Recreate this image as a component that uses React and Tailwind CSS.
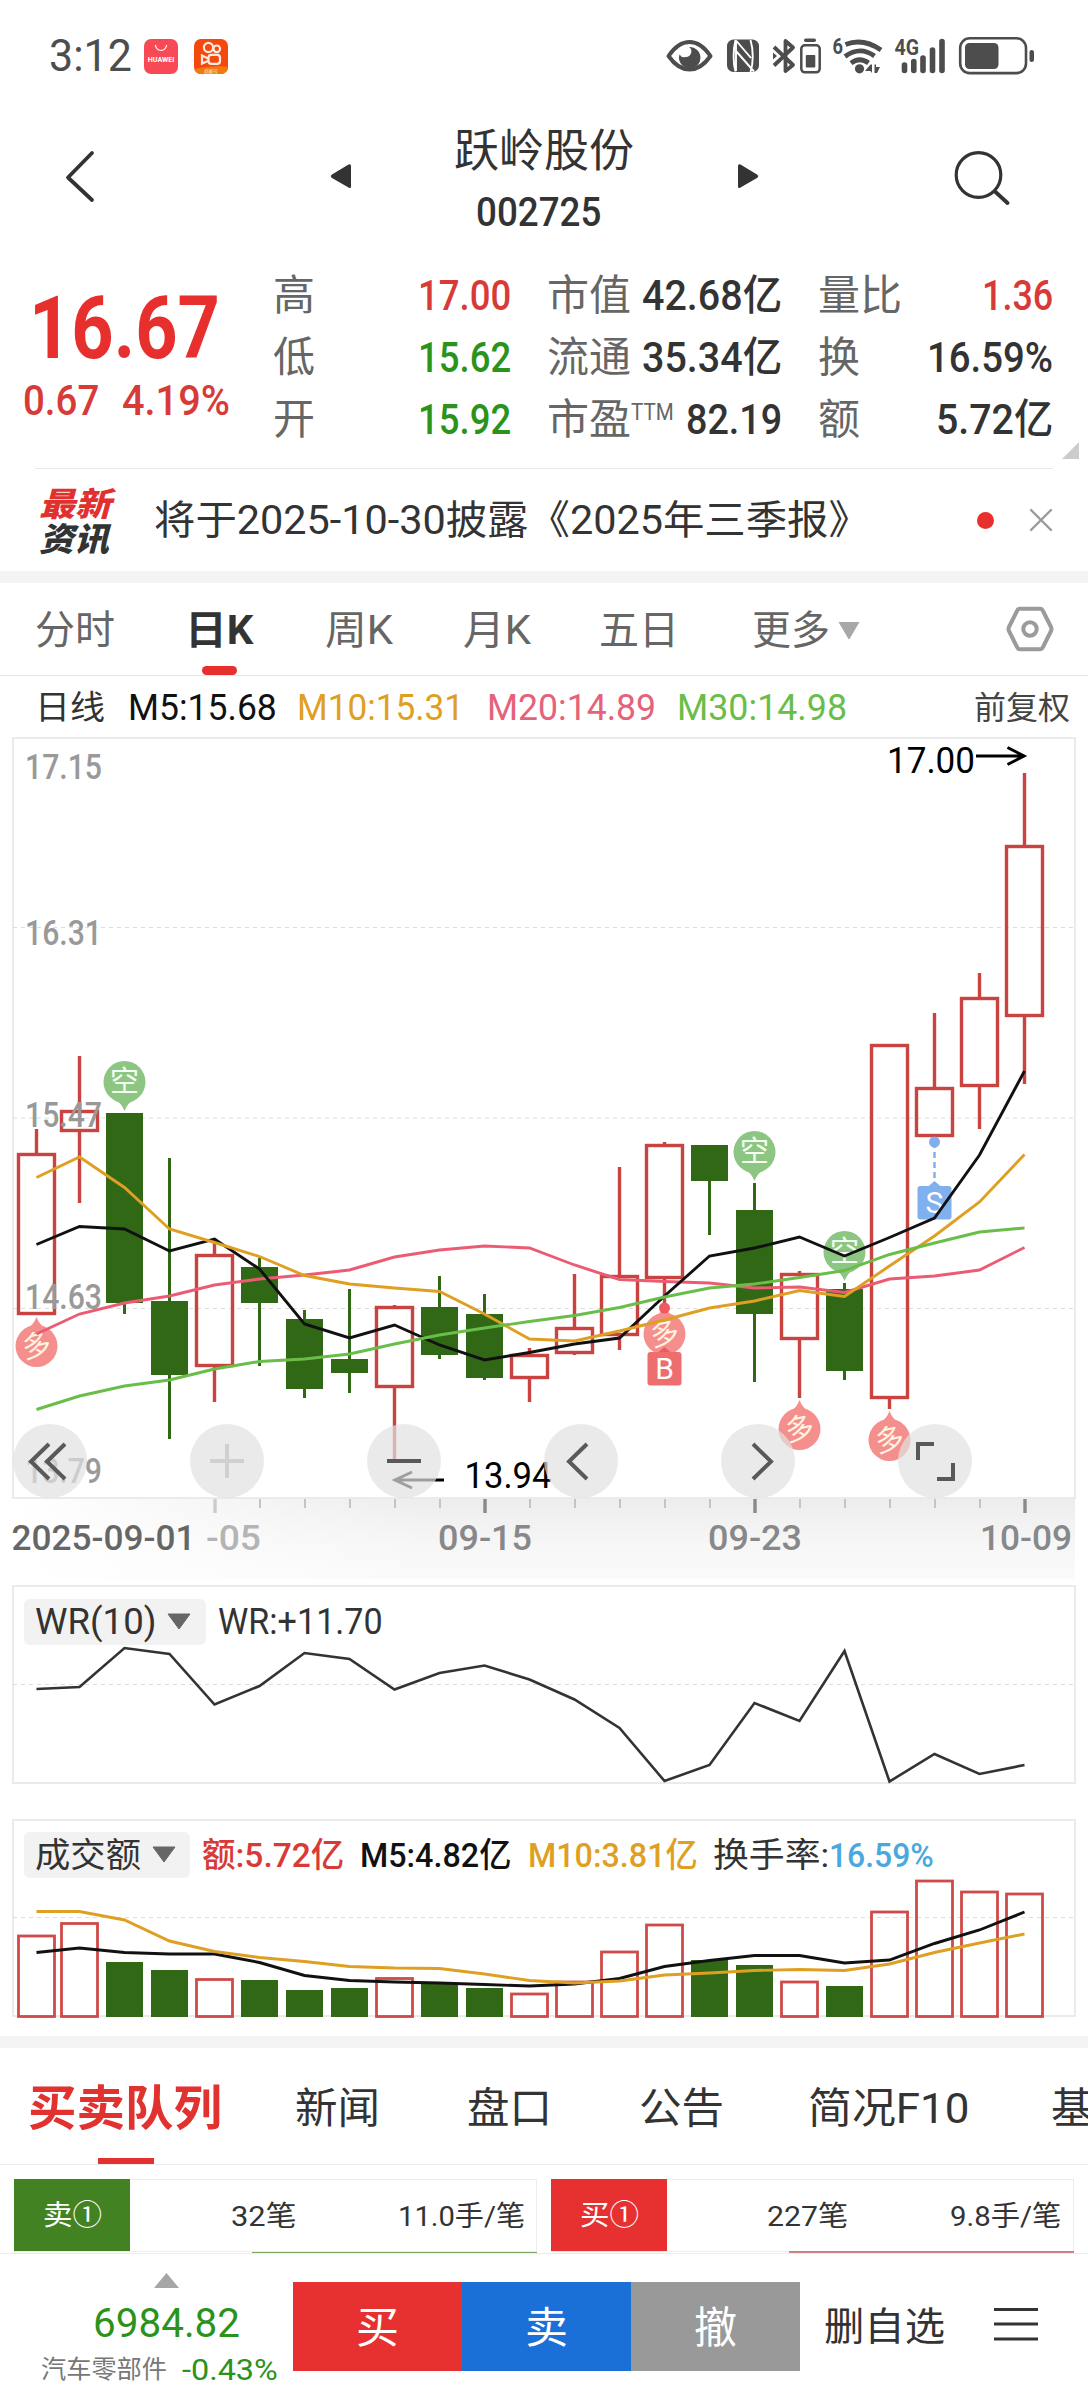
import { useLayoutEffect, useRef } from 'react'
import clsx from 'clsx'

const RED = '#c94341'
const GREEN = '#316815'

// x of every trading day, shared by all three charts
const DAY_X = Array.from({ length: 23 }, (_, i) => (i === 0 ? 36.5 : 34.5 + 45 * i))

// [up, high, top, bottom, low] in chart pixels
const CANDLES = [
  [1, 1129, 1153, 1315, 1315],
  [1, 1056, 1110, 1132, 1203],
  [0, 1113, 1113, 1303, 1314],
  [0, 1158, 1301, 1375, 1439],
  [1, 1238, 1254, 1367, 1402],
  [0, 1258, 1267, 1303, 1366],
  [0, 1310, 1319, 1389, 1398],
  [0, 1289, 1359, 1373, 1393],
  [1, 1305, 1306, 1388, 1463],
  [0, 1276, 1307, 1355, 1359],
  [0, 1294, 1314, 1378, 1380],
  [1, 1348, 1354, 1379, 1402],
  [1, 1274, 1327, 1354, 1355],
  [1, 1167, 1275, 1336, 1350],
  [1, 1142, 1144, 1279, 1308],
  [0, 1145, 1145, 1181, 1235],
  [0, 1183, 1210, 1314, 1382],
  [1, 1271, 1273, 1340, 1398],
  [0, 1283, 1289, 1371, 1380],
  [1, 1044, 1044, 1399, 1409],
  [1, 1013, 1087, 1137, 1137],
  [1, 973, 997, 1087, 1129],
  [1, 773, 845, 1017, 1084],
]

const MA = [
  { color: '#eb5c73', ys: [1334, 1314, 1303, 1296, 1285, 1279, 1275, 1270, 1257, 1250, 1246, 1248, 1265, 1279.5, 1281.5, 1283, 1288, 1287, 1292.5, 1279, 1276, 1270, 1247.5] },
  { color: '#111', ys: [1244.5, 1226.5, 1229, 1251, 1239, 1269, 1324, 1338, 1325, 1345, 1360, 1352.5, 1344, 1338, 1296, 1256, 1248, 1237, 1256, 1237.5, 1218, 1155, 1071] },
  { color: '#de9f22', ys: [1177.5, 1157, 1187.5, 1229, 1242.5, 1256.5, 1275.5, 1284, 1288, 1291.5, 1314, 1339, 1341, 1331, 1320, 1308, 1301, 1290.5, 1296.5, 1266, 1236, 1202, 1154.5] },
  { color: '#69bd49', ys: [1409.5, 1396, 1386, 1380, 1369, 1361.5, 1359, 1354, 1344, 1335, 1328, 1321.5, 1315.5, 1307.5, 1297, 1288, 1284, 1277.5, 1270.5, 1254.5, 1243, 1232, 1228] },
]

const WR = [1689, 1687, 1648, 1654, 1704.5, 1686, 1653, 1659, 1689.5, 1673, 1665.5, 1679.5, 1699.5, 1728, 1781, 1765, 1703, 1721, 1651, 1781.5, 1754, 1774, 1765]

// [up, top]
const VOLUME = [
  [1, 1935], [1, 1922.5], [0, 1962], [0, 1970], [1, 1978.5], [0, 1980], [0, 1990], [0, 1988],
  [1, 1977.5], [0, 1983.5], [0, 1988], [1, 1993], [1, 1981], [1, 1951], [1, 1924], [0, 1960],
  [0, 1965], [1, 1981], [0, 1986], [1, 1911], [1, 1880], [1, 1891], [1, 1893],
]
const VOLUME_MA = [
  { color: '#111', ys: [1952.5, 1948, 1952.5, 1954, 1954, 1962.5, 1975.5, 1980.5, 1982, 1983, 1984.5, 1986, 1984, 1978.5, 1966.5, 1960.5, 1955.5, 1955.5, 1963, 1960, 1943.5, 1930, 1912] },
  { color: '#de9f22', ys: [1911.5, 1911.5, 1920, 1941, 1951.5, 1957.5, 1961.5, 1966.5, 1968, 1968.5, 1974, 1980.5, 1983, 1981, 1975, 1973, 1970.5, 1969.5, 1970.5, 1964, 1952.5, 1943, 1934] },
]

const toPoints = (ys) => ys.map((y, i) => `${DAY_X[i]},${y}`).join(' ')

/**
 * Single line of text squeezed or stretched to the width of its box.
 * The box width comes from className (w-[..px]).
 */
function Fit({ className, children }) {
  const box = useRef(null)
  const inner = useRef(null)

  useLayoutEffect(() => {
    const scale = box.current.clientWidth / inner.current.offsetWidth
    inner.current.style.transform = `scaleX(${scale})`
  }, [children])

  return (
    <span ref={box} className={clsx('block shrink-0 whitespace-nowrap', className)}>
      <span ref={inner} className="inline-block origin-left align-top">{children}</span>
    </span>
  )
}

function StatusBar() {
  return (
    <div className="flex h-[100px] items-center pl-[49px] pt-[12px] text-[#4d4d4d]">
      <Fit className="w-[83px] text-[45px] leading-[50px]">3:12</Fit>
      <svg className="ml-3 h-[35px] w-[34px]" viewBox="0 0 34 35">
        <rect width="34" height="35" rx="7" fill="#f74a55" />
        <path d="M11.500 6a5.500 5.500 0 0 0 11 0" fill="none" stroke="#fff" strokeWidth="1.200" />
        <text x="3.800" y="22.500" fontSize="6.800" fontWeight="700" fill="#fff" textLength="26.500" lengthAdjust="spacingAndGlyphs">HUAWEI</text>
      </svg>
      <svg className="ml-4 h-[35px] w-[34px]" viewBox="0 0 34 35">
        <clipPath id="kwai"><rect width="34" height="35" rx="7" /></clipPath>
        <g clipPath="url(#kwai)">
          <rect width="34" height="35" fill="#f4480c" />
          <path d="M0 30Q17 26 34 28V35H0Z" fill="#f07a12" />
        </g>
        <g fill="none" stroke="#ffeadf" strokeWidth="2.200">
          <circle cx="14.500" cy="8.500" r="4.600" />
          <circle cx="22.800" cy="9.800" r="3.300" />
          <rect x="14.500" y="15.800" width="11.500" height="9" rx="2.800" />
          <path d="M14 19.500 8 16.500v8l6-2.500" />
        </g>
        <text x="10" y="33.500" fontSize="5" fill="#ffe2c4" textLength="14">商家号</text>
      </svg>
      <StatusIcons />
    </div>
  )
}

function StatusIcons() {
  return (
    <svg className="-mt-[2px] ml-[428px] h-[50px] w-[384px]" viewBox="656 30 384 50" fill="#4d4d4d">
      <path d="M668.500 56Q678 42 689.500 42T710.500 56Q701 69.500 689.500 69.500T668.500 56Z" fill="none" stroke="#4d4d4d" strokeWidth="4" strokeLinejoin="round" />
      <path d="M689 47a10.700 10.700 0 1 1-9.500 7.500 5.500 5.500 0 0 0 6 2.500 5.500 5.500 0 0 0 3.500-10Z" />
      {/* nfc */}
      <rect x="727" y="39.500" width="32" height="32.500" rx="6.500" />
      <path d="M735.500 71.500C733 63 733 50 735.500 40M736 40.500 751 58M736 40.500V71M736 51 754 71.500M750.500 40C753.500 50 753.500 63 750.500 72" fill="none" stroke="#fff" strokeWidth="1.900" />
      {/* bluetooth and its battery */}
      <path d="M774 47 793 65 785.500 71V41L793 47.500 774 65.500" fill="none" stroke="#4d4d4d" strokeWidth="3.800" strokeLinejoin="round" />
      <path d="m773 52.500 4 3.500-4 3.500Z" />
      <rect x="804" y="38.500" width="12" height="3.500" rx="1.700" />
      <rect x="801.300" y="45.300" width="18.400" height="27" rx="3.500" fill="none" stroke="#4d4d4d" strokeWidth="2.500" />
      <rect x="805.800" y="55" width="9.500" height="12.500" rx="1" />
      {/* wifi 6 */}
      <text x="832.500" y="53.500" fontSize="22" fontWeight="700" textLength="10.500" lengthAdjust="spacingAndGlyphs">6</text>
      <g fill="none" stroke="#4d4d4d" strokeWidth="4.800">
        <path d="M845.500 44.500Q863 37.500 881 50" />
        <path d="M845 56.500Q860 45.500 874.500 56" />
        <path d="M851 63.200Q859.500 56.500 868.500 63" />
      </g>
      <circle cx="859.500" cy="68.800" r="4.600" />
      <path d="M872 64.500v8.500l-1.500-2h-5.500l5.500-6.500ZM874.500 64.500h1.500v2.500h4l-3 6h-2.500Z" />
      {/* signal */}
      <text x="894.500" y="54.500" fontSize="21.500" fontWeight="700" textLength="24.500" lengthAdjust="spacingAndGlyphs">4G</text>
      <g stroke="#4d4d4d" strokeWidth="5.600" strokeLinecap="round">
        <path d="M904.500 65V70.500M913.800 61.500V70.500M923 58V70.500M932.500 50V70.500M942 41.500V70.500" />
      </g>
      {/* battery */}
      <rect x="960.200" y="38.300" width="65.800" height="34.800" rx="9.500" fill="none" stroke="#4d4d4d" strokeWidth="2.600" />
      <rect x="965" y="43" width="33.500" height="26" rx="4.500" />
      <rect x="1029.500" y="50" width="4.500" height="12" rx="2.200" />
    </svg>
  )
}

function Header() {
  return (
    <header className="flex h-[152px] items-center text-[#333]">
      <svg className="ml-[64px] h-[54px] w-8" viewBox="0 0 32 54" fill="none" stroke="#333" strokeWidth="3.800" strokeLinecap="round" strokeLinejoin="round">
        <path d="M28 4 4 28.500 28 51" />
      </svg>
      <svg className="ml-[234px] h-[26px] w-[22px]" viewBox="0 0 22 26">
        <path d="M2 11.500 18.500 1.500Q21 .5 21 3V23.500Q21 26 18.500 24.500L2 15Q-.5 13.300 2 11.500Z" fill="#333" />
      </svg>
      <div className="ml-[100px] flex w-[184px] flex-col items-center pt-2">
        <h1 className="pb-1 text-[45px] leading-[62px]">跃岭股份</h1>
        <Fit className="mr-3 w-[125px] text-[40px] font-medium leading-[52px]">002725</Fit>
      </div>
      <svg className="ml-[101px] h-[26px] w-[22px]" viewBox="0 0 22 26">
        <path d="M20 11.500 3.500 1.500Q1 .5 1 3V23.500Q1 26 3.500 24.500L20 15Q22.500 13.300 20 11.500Z" fill="#333" />
      </svg>
      <svg className="ml-[193px] mt-[4px] h-[58px] w-[58px]" viewBox="950 150 58 58" fill="none" stroke="#333" strokeWidth="3.200" strokeLinecap="round">
        <circle cx="976.500" cy="176" r="22.300" />
        <path d="M993 192.500 1005.500 204" strokeWidth="3.800" />
      </svg>
    </header>
  )
}

const STATS = [
  [
    { label: '高', value: '17.00', className: 'w-[93px] text-[#d83a38]' },
    { label: '低', value: '15.62', className: 'w-[93px] text-[#2b931c]' },
    { label: '开', value: '15.92', className: 'w-[93px] text-[#2b931c]' },
  ],
  [
    { label: '市值', value: '42.68亿', className: 'w-[140px]' },
    { label: '流通', value: '35.34亿', className: 'w-[140px]' },
    { label: '市盈', sup: 'TTM', value: '82.19', className: 'w-[96px]' },
  ],
  [
    { label: '量比', value: '1.36', className: 'w-[71px] text-[#d83a38]' },
    { label: '换', value: '16.59%', className: 'w-[126px]' },
    { label: '额', value: '5.72亿', className: 'w-[117px]' },
  ],
]

function Quote() {
  return (
    <section className="relative flex h-[216px]">
      <div className="w-[273px] shrink-0 pt-[31px] text-[#e7302e]">
        <Fit className="ml-[29px] w-[191px] text-[87px] font-bold leading-[90px]">16.67</Fit>
        <div className="flex text-[43px] font-medium leading-[54px] text-[#d83a38]">
          <Fit className="ml-[23px] w-[76px]">0.67</Fit>
          <Fit className="ml-[23px] w-[108px]">4.19%</Fit>
        </div>
      </div>
      <div className="flex gap-9 pt-[13px]">
        {STATS.map((column, i) => (
          <div key={i} className={i === 0 ? 'w-[238px]' : 'w-[235px]'}>
            {column.map(({ label, sup, value, className }) => (
              <div key={label} className="flex h-[62px] items-center justify-between text-[42px] leading-[62px] text-[#333]">
                <span className="flex text-[#666]">
                  {label}
                  {sup && <Fit className="-mt-[7px] w-[43px] text-[23px]">{sup}</Fit>}
                </span>
                <Fit className={clsx('font-medium', className)}>{value}</Fit>
              </div>
            ))}
          </div>
        ))}
      </div>
      <svg className="absolute bottom-[9px] right-[9px] size-[17px]" viewBox="0 0 17 17">
        <path d="M17 0V17H0Z" fill="#ccc" />
      </svg>
    </section>
  )
}

function NewsStrip() {
  return (
    <section className="border-b-[12px] border-[#f4f4f4]">
      <div className="mx-[35px] flex h-[103px] items-center border-t border-[#e8e8e8]">
        <div className="ml-[4px] flex w-[84px] flex-col pt-[3px] text-[33px] font-black italic leading-[35px]">
          <Fit className="w-[72px] text-[#e2302f]">最新</Fit>
          <Fit className="w-[70px] text-[#333]">资讯</Fit>
        </div>
        <Fit className="ml-[34px] w-[716px] pt-[2px] text-[40px] leading-[60px] text-[#333]">
          将于2025-10-30披露《2025年三季报》
        </Fit>
        <i className="ml-[107px] size-[17px] shrink-0 rounded-full bg-[#e7302e]" />
        <svg className="ml-[35px] size-6 shrink-0" viewBox="0 0 24 24" stroke="#999" strokeWidth="2.400" strokeLinecap="round">
          <path d="M2 2 22 22M22 2 2 22" />
        </svg>
      </div>
    </section>
  )
}

function PeriodTabs() {
  return (
    <nav className="relative flex h-[93px] items-center border-b border-[#e6e6e6] pt-[3px] text-[40px] leading-[60px] text-[#666]">
      <Fit className="ml-[35px] w-[80px]">分时</Fit>
      <Fit className="ml-[70px] w-[68px] font-bold text-[#333]">日K</Fit>
      <Fit className="ml-[72px] w-[68px]">周K</Fit>
      <Fit className="ml-[70px] w-[68px]">月K</Fit>
      <Fit className="ml-[68px] w-[80px]">五日</Fit>
      <Fit className="ml-[73px] w-[78px]">更多</Fit>
      <svg className="ml-[8px] h-[18px] w-[22px]" viewBox="0 0 22 18">
        <path d="M1 0H21L11 17Z" fill="#a8a8a8" stroke="#a8a8a8" strokeLinejoin="round" />
      </svg>
      <svg className="-mt-[3px] ml-[146px] h-[46px] w-[48px]" viewBox="0 0 48 46" fill="none" stroke="#9b9b9b" strokeWidth="4" strokeLinejoin="round">
        <path d="M13.500 2.800H34Q36 2.800 37 5L45 21Q46 23 45 25L37 41Q36 43.200 34 43.200H13.500Q12 43.200 11 41L3 25Q2 23 3 21L11 5Q12 2.800 13.500 2.800Z" />
        <circle cx="24" cy="23" r="6.700" />
      </svg>
      <i className="absolute bottom-0 left-[202px] h-[9px] w-[35px] rounded-full bg-[#e7302e]" />
    </nav>
  )
}

function MaLegend() {
  return (
    <div className="flex h-[61px] items-center pt-[2px] text-[36px] leading-[58px]">
      <Fit className="ml-[35px] w-[70px] text-[33px] text-[#333]">日线</Fit>
      <Fit className="ml-[23px] w-[149px] text-[#111]">M5:15.68</Fit>
      <Fit className="ml-[20px] w-[167px] text-[#de9f22]">M10:15.31</Fit>
      <Fit className="ml-[23px] w-[169px] text-[#e6627a]">M20:14.89</Fit>
      <Fit className="ml-[21px] w-[170px] text-[#69bd49]">M30:14.98</Fit>
      <Fit className="ml-[127px] w-[96px] text-[32px] text-[#444]">前复权</Fit>
    </div>
  )
}

function Badge({ day, y, long }) {
  const x = DAY_X[day]
  const dir = long ? -1 : 1
  return (
    <g opacity="0.92">
      <path
        d={`M${x - 9} ${y + dir * 18}Q${x - 3} ${y + dir * 21} ${x} ${y + dir * 29}Q${x + 3} ${y + dir * 21} ${x + 9} ${y + dir * 18}Z`}
        fill={long ? '#f48685' : '#84c178'}
      />
      <circle cx={x} cy={y} r="21" fill={long ? '#f48685' : '#84c178'} />
      <text x={x} y={y + 10} fontSize="29" textAnchor="middle" fill={long ? '#fff3df' : '#f2fff0'} transform={long ? `rotate(-12 ${x} ${y})` : undefined}>
        {long ? '多' : '空'}
      </text>
    </g>
  )
}

function TradeMark({ day, dotY, y, text, color }) {
  const x = DAY_X[day]
  return (
    <g fill={color}>
      <circle cx={x} cy={dotY} r="5.500" />
      <path d={`M${x} ${dotY}V${y}`} stroke={color} strokeWidth="2.500" strokeDasharray="6 4" />
      <path d={`M${x - 7} ${y + 1}L${x} ${y - 5}L${x + 7} ${y + 1}Z`} />
      <rect x={x - 17} y={y} width="34" height="33.500" rx="3" />
      <text x={x} y={y + 27} fontSize="30" textAnchor="middle" fill="#fff">{text}</text>
    </g>
  )
}

const PRICE_LABELS = [['17.15', 779], ['16.31', 945], ['15.47', 1127], ['14.63', 1309], ['13.79', 1483]]

function CandleChart() {
  return (
    <div className="relative">
      <svg className="block h-[842px] w-full" viewBox="0 737 1088 842">
        <defs>
          <linearGradient id="axisShade" x1="0" y1="0" x2="0" y2="1">
            <stop offset="0" stopColor="#ededed" />
            <stop offset="0.600" stopColor="#f7f7f7" />
            <stop offset="1" stopColor="#fafafa" />
          </linearGradient>
          <linearGradient id="axisFade">
            <stop offset="0" stopColor="#fff" />
            <stop offset="0.400" stopColor="#fff" stopOpacity="0.600" />
            <stop offset="1" stopColor="#fff" stopOpacity="0" />
          </linearGradient>
        </defs>
        <rect x="13" y="1499" width="1062" height="80" fill="url(#axisShade)" />
        <rect x="13" y="1499" width="420" height="80" fill="url(#axisFade)" />
        <rect x="13" y="738" width="1062" height="760" fill="none" stroke="#ebebeb" strokeWidth="2" />
        <path d="M13 927.500H1074M13 1118H1074M13 1308.500H1074" stroke="#dedede" strokeWidth="1.200" strokeDasharray="4 4" />

        {CANDLES.map(([up, high, top, bottom, low], i) =>
          up ? (
            <g key={i} stroke={RED} strokeWidth="3.400" fill="none">
              <rect x={DAY_X[i] - 18} y={top + 1.5} width="36" height={bottom - top - 3} />
              <path d={`M${DAY_X[i]} ${high}V${top}M${DAY_X[i]} ${bottom}V${low}`} />
            </g>
          ) : (
            <g key={i} fill={GREEN}>
              <rect x={DAY_X[i] - 18.5} y={top} width="37" height={bottom - top} />
              <rect x={DAY_X[i] - 1.5} y={high} width="3" height={low - high} />
            </g>
          ),
        )}

        <g fontSize="34.500" fontWeight="500" fill="#999">
          {PRICE_LABELS.map(([text, y]) => (
            <text key={text} x="25" y={y} textLength="77" lengthAdjust="spacingAndGlyphs">{text}</text>
          ))}
        </g>

        <Badge day={2} y={1082} />
        <Badge day={16} y={1152} />
        <Badge day={18} y={1252} />
        <Badge day={0} y={1346} long />
        <Badge day={14} y={1334} long />
        <Badge day={17} y={1429} long />
        <Badge day={19} y={1440} long />
        <circle cx={DAY_X[14]} cy="1308" r="5.500" fill="#ee5a60" />
        <path d={`M${DAY_X[14] - 7} 1353L${DAY_X[14]} 1347L${DAY_X[14] + 7} 1353Z`} fill="#ee5a60" />
        <rect x={DAY_X[14] - 17} y="1352" width="34" height="33.500" rx="3" fill="#ee6d6e" />
        <text x={DAY_X[14]} y="1379" fontSize="30" textAnchor="middle" fill="#fff">B</text>
        <TradeMark day={20} dotY={1142} y={1186} text="S" color="#80b0ee" />

        {MA.map(({ color, ys }) => (
          <polyline key={color} points={toPoints(ys)} fill="none" stroke={color} strokeWidth="2.900" />
        ))}

        <g fontSize="36" fill="#000">
          <text x="887" y="773" textLength="88" lengthAdjust="spacingAndGlyphs">17.00</text>
          <text x="464.500" y="1488" textLength="87" lengthAdjust="spacingAndGlyphs">13.94</text>
        </g>
        <path d="M976 756H1024M1007.500 747.500 1024 756 1007.500 764.500" fill="none" stroke="#000" strokeWidth="3" />
        <path d="M444 1480H395M412 1472 395 1480 412 1488" fill="none" stroke="#000" strokeWidth="3" />

        {DAY_X.slice(4).map((x, i) =>
          i % 6 === 0 ? (
            <path key={x} d={`M${x + 0.5} 1499V1513`} stroke={i === 0 ? '#ccc' : '#8a8a8a'} strokeWidth="3.400" />
          ) : (
            <path key={x} d={`M${x + 0.5} 1499V1508`} stroke="#c4c4c4" strokeWidth="2" />
          ),
        )}
        <g fontSize="34.500" fontWeight="500" fill="#888">
          <text x="11.500" y="1550" fill="#666" textLength="184" lengthAdjust="spacingAndGlyphs">2025-09-01</text>
          <text x="206" y="1550" fill="#b4b4b4" textLength="55" lengthAdjust="spacingAndGlyphs">-05</text>
          <text x="438" y="1550" textLength="94" lengthAdjust="spacingAndGlyphs">09-15</text>
          <text x="708" y="1550" textLength="94" lengthAdjust="spacingAndGlyphs">09-23</text>
          <text x="980" y="1550" textLength="92" lengthAdjust="spacingAndGlyphs">10-09</text>
        </g>
      </svg>
      <ChartControls />
    </div>
  )
}

// Glyphs of the round buttons, drawn in a 74 × 74 box
const CONTROLS = [
  { name: 'first', d: 'M36 20 18 37.500 36 55M52 20 34 37.500 52 55' },
  { name: 'zoom in', d: 'M20 37H54M37 20V54', disabled: true },
  { name: 'zoom out', d: 'M20 37H54' },
  { name: 'previous', d: 'M43 20 25 37.500 43 55' },
  { name: 'next', d: 'M32 20 50 37.500 32 55' },
  { name: 'fullscreen', d: 'M20 36V20H36M39 55H55V39' },
]

function ChartControls() {
  return (
    <div className="absolute left-[13px] top-[687px] flex gap-[103px]">
      {CONTROLS.map(({ name, d, disabled }) => (
        <button key={name} aria-label={name} className="size-[74px] rounded-full bg-[#e1e1e1]/70">
          <svg viewBox="0 0 74 74" fill="none" stroke={disabled ? '#d0d0d0' : '#595959'} strokeWidth="4">
            <path d={d} />
          </svg>
        </button>
      ))}
    </div>
  )
}

function IndicatorPill({ className, children }) {
  return (
    <div className={clsx('flex h-[46px] items-center rounded-md bg-[#f2f2f2] pl-[11px] text-[#333]', className)}>
      {children}
      <svg className="ml-[11px] h-[17px] w-6" viewBox="0 0 24 17">
        <path d="M1 1H23L12 16Z" fill="#666" stroke="#666" strokeLinejoin="round" />
      </svg>
    </div>
  )
}

function WrChart() {
  return (
    <div className="relative">
      <svg className="block h-[240px] w-full" viewBox="0 1579 1088 240">
        <rect x="13" y="1586" width="1062" height="197" fill="none" stroke="#ebebeb" strokeWidth="2" />
        <path d="M13 1684.500H1074" stroke="#dedede" strokeWidth="1.200" strokeDasharray="4 4" />
        <polyline points={toPoints(WR)} fill="none" stroke="#333" strokeWidth="2.600" />
      </svg>
      <div className="absolute left-[24px] top-[18px] flex items-center text-[36px] leading-[48px] text-[#333]">
        <IndicatorPill className="w-[182px]">
          <Fit className="w-[121px] pt-px">WR(10)</Fit>
        </IndicatorPill>
        <Fit className="ml-[12px] w-[165px] pt-px">WR:+11.70</Fit>
      </div>
    </div>
  )
}

function VolumeChart() {
  return (
    <div className="relative">
      <svg className="block h-[217px] w-full" viewBox="0 1819 1088 217">
        <rect x="13" y="1820" width="1062" height="196" fill="none" stroke="#ebebeb" strokeWidth="2" />
        <path d="M13 1917.500H1074" stroke="#dedede" strokeWidth="1.200" strokeDasharray="4 4" />
        {VOLUME.map(([up, top], i) =>
          up ? (
            <rect key={i} x={DAY_X[i] - 18} y={top + 1} width="36" height={2016.5 - top - 1} fill="none" stroke="#cf4a48" strokeWidth="2.800" />
          ) : (
            <rect key={i} x={DAY_X[i] - 18.5} y={top} width="37" height={2017 - top} fill={GREEN} />
          ),
        )}
        {VOLUME_MA.map(({ color, ys }) => (
          <polyline key={color} points={toPoints(ys)} fill="none" stroke={color} strokeWidth="2.900" />
        ))}
      </svg>
      <div className="absolute left-[24px] top-[11px] flex items-center text-[34px] leading-[48px] text-[#333]">
        <IndicatorPill className="w-[166px]">
          <Fit className="w-[106px] pt-px">成交额</Fit>
        </IndicatorPill>
        <Fit className="ml-[12px] w-[142px] pt-px font-medium text-[#d83a38]">额:5.72亿</Fit>
        <Fit className="ml-[16px] w-[151px] pt-px font-medium text-[#111]">M5:4.82亿</Fit>
        <Fit className="ml-[17px] w-[170px] pt-px font-medium text-[#de9f22]">M10:3.81亿</Fit>
        <Fit className="ml-[15px] w-[116px] pt-px">换手率:</Fit>
        <Fit className="w-[105px] pt-px font-medium text-[#4aa8dd]">16.59%</Fit>
      </div>
    </div>
  )
}

function InfoTabs() {
  return (
    <nav className="relative flex h-[129px] items-center overflow-hidden border-b border-t-[12px] border-b-[#ececec] border-t-[#f4f4f4] pt-[6px] text-[42px] leading-[60px] text-[#333]">
      <Fit className="ml-[28px] w-[194px] text-[48px] font-bold text-[#e2322f]">买卖队列</Fit>
      <Fit className="ml-[73px] w-[85px]">新闻</Fit>
      <Fit className="ml-[87px] w-[85px]">盘口</Fit>
      <Fit className="ml-[87px] w-[85px]">公告</Fit>
      <Fit className="ml-[84px] w-[161px]">简况F10</Fit>
      <Fit className="ml-[82px] w-[42px]">基</Fit>
      <i className="absolute bottom-0 left-[98px] h-[6px] w-[56px] bg-[#e2322f]" />
    </nav>
  )
}

function OrderQueue() {
  return (
    <section className="flex h-[89px] gap-[14px] border-b border-[#ececec] pl-[14px] pt-[14px] text-[28px] leading-[73px] text-[#333]">
      <div className="relative flex h-[73px] w-[523px] border border-l-0 border-[#ececec]">
        <div className="-mt-px h-[72px] w-[116px] bg-[#438222] pl-[29px] text-white">
          <Fit className="w-[59px]">卖①</Fit>
        </div>
        <Fit className="ml-[101px] w-[65px]">32笔</Fit>
        <Fit className="ml-[102px] w-[127px]">11.0手/笔</Fit>
        <i className="absolute -bottom-[2px] -right-px h-px w-[285px] bg-[#7fa864]" />
      </div>
      <div className="relative flex h-[73px] w-[523px] border border-l-0 border-[#ececec]">
        <div className="-mt-px h-[72px] w-[116px] bg-[#e73030] pl-[29px] text-white">
          <Fit className="w-[59px]">买①</Fit>
        </div>
        <Fit className="ml-[100px] w-[81px]">227笔</Fit>
        <Fit className="ml-[102px] w-[111px]">9.8手/笔</Fit>
        <i className="absolute -bottom-[2px] -right-px h-[2px] w-[285px] bg-[#c98583]" />
      </div>
    </section>
  )
}

function TradeBar() {
  return (
    <footer className="flex h-[146px]">
      <div className="w-[293px]">
        <svg className="ml-[154px] mt-[19px] h-[15px] w-[25px]" viewBox="0 0 25 15">
          <path d="M12.500 0 25 15H0Z" fill="#a6a6a6" />
        </svg>
        <Fit className="ml-[93px] mt-[10px] w-[147px] text-[41px] leading-[50px] text-[#2b931c]">6984.82</Fit>
        <div className="mt-[4px] flex items-center leading-[36px]">
          <Fit className="ml-[41px] w-[126px] text-[25px] text-[#777]">汽车零部件</Fit>
          <Fit className="ml-[15px] w-[96px] text-[30px] text-[#2b931c]">-0.43%</Fit>
        </div>
      </div>
      <div className="mt-[28px] flex h-[89px] text-center text-[43px] leading-[92px] text-white">
        <button className="w-[169px] bg-[#e73030]">买</button>
        <button className="w-[169px] bg-[#1b70d8]">卖</button>
        <button className="w-[169px] bg-[#999]">撤</button>
      </div>
      <Fit className="ml-[24px] mt-[28px] w-[121px] text-[39px] leading-[91px] text-[#333]">删自选</Fit>
      <svg className="ml-[49px] mt-[52px] h-[36px] w-[44px]" viewBox="0 0 44 36" stroke="#333" strokeWidth="3">
        <path d="M0 3.500H44M0 18H44M0 33H44" />
      </svg>
    </footer>
  )
}

export default function App() {
  return (
    <div className="h-[2400px] w-[1088px] overflow-hidden bg-white font-['Roboto','Noto_Sans_CJK_SC',sans-serif]">
      <StatusBar />
      <Header />
      <Quote />
      <NewsStrip />
      <PeriodTabs />
      <MaLegend />
      <CandleChart />
      <WrChart />
      <VolumeChart />
      <InfoTabs />
      <OrderQueue />
      <TradeBar />
    </div>
  )
}
